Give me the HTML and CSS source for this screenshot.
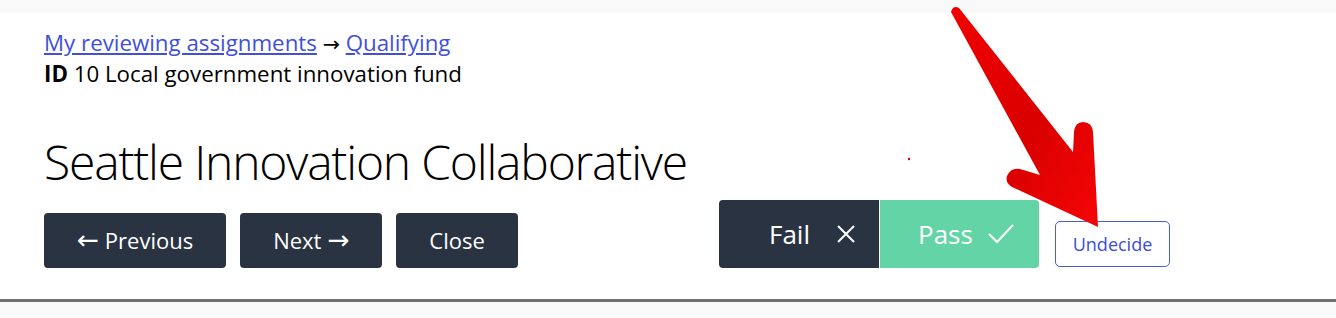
FILE: index.html
```html
<!DOCTYPE html>
<html lang="en">
<head>
    <meta charset="UTF-8">
    <meta name="viewport" content="width=device-width, initial-scale=1.0">
    <title>Seattle Innovation Collaborative</title>
    <link rel="stylesheet" href="styles.css">
</head>

<body>
    <main class="pagina">
        <nav class="trilha">
            <a href="#">My reviewing assignments</a> <span class="seta">&rarr;</span> <a href="#">Qualifying</a>
        </nav>
        <p class="programa"><b>ID</b> 10 Local government innovation fund</p>

        <div class="linha">
            <div class="coluna">
                <h1>Seattle Innovation Collaborative</h1>
                <div class="navegacao">
                    <button class="botao"><span class="seta">&larr;</span> Previous</button>
                    <button class="botao">Next <span class="seta">&rarr;</span></button>
                    <button class="botao">Close</button>
                </div>
            </div>

            <div class="decisao">
                <div class="grupo">
                    <button class="voto falha">
                        <span>Fail</span>
                        <svg width="18" height="18" viewBox="0 0 18 18"><path d="M1 1 L17 17 M17 1 L1 17" stroke="#fff" stroke-width="2" fill="none"/></svg>
                    </button>
                    <button class="voto passa">
                        <span>Pass</span>
                        <svg width="26" height="20" viewBox="0 0 26 20"><path d="M1 10 L9 18 L25 1" stroke="#fff" stroke-width="2" fill="none"/></svg>
                    </button>
                </div>
                <button class="indeciso">Undecide</button>
            </div>
        </div>
    </main>

    <svg class="anotacao" width="1336" height="318" viewBox="0 0 1336 318">
        <defs>
            <linearGradient id="vermelho" x1="0" y1="0" x2="1" y2="1">
                <stop offset="0" stop-color="#f20000"/>
                <stop offset="0.55" stop-color="#d90000"/>
                <stop offset="1" stop-color="#f50505"/>
            </linearGradient>
        </defs>
        <path fill="url(#vermelho)" d="M951 12 Q953 5 959 8 L1073 152 L1074 132 Q1075 122 1083 122 Q1092 122 1093 132 L1098 227 L1012 187 Q1005 183 1007 176 Q1011 167 1020 169 L1040 175 Z"/>
        <circle cx="909" cy="159" r="1.2" fill="#e00000"/>
    </svg>
</body>
</html>
```

FILE: styles.css
```css
body{
    margin: 0;
    background: #f9f9f9;
    font-family: "Open Sans", "Liberation Sans", sans-serif;
    color: #000;
}

.pagina{
    margin-top: 13px;
    background: #fff;
    border-bottom: 3px solid #707070;
    padding: 15px 44px 31px;
}

.trilha, .programa{
    font-size: 22.3px;
    line-height: 30px;
    margin: 0;
}

.trilha a{
    color: #4150dc;
}

.seta{
    font-family: "DejaVu Sans", sans-serif;
}

.trilha .seta{
    font-size: 0.92em;
}

.botao .seta{
    font-size: 1.2em;
    line-height: 1;
}

.programa b{
    font-weight: 700;
}

.linha{
    display: flex;
    align-items: flex-end;
    margin-top: 44px;
}

.coluna{
    width: 675px;
}

h1{
    font-size: 48px;
    font-weight: 300;
    font-stretch: 94%;
    letter-spacing: -1.2px;
    white-space: nowrap;
    line-height: 57.6px;
    margin: 0 0 22px;
}

.navegacao{
    display: flex;
    gap: 14px;
}

button{
    font-family: inherit;
    cursor: pointer;
}

.botao{
    height: 55px;
    padding: 0 33px;
    border: none;
    border-radius: 4px;
    background: #293342;
    color: #fff;
    font-size: 22px;
}

.decisao{
    display: flex;
    align-items: flex-end;
    gap: 16px;
}

.grupo{
    display: flex;
    gap: 1px;
}

.voto{
    height: 68px;
    display: flex;
    align-items: center;
    border: none;
    color: #fff;
    font-size: 26px;
}

.falha{
    width: 160px;
    padding: 0 24px 0 50px;
    gap: 27px;
    background: #293342;
    border-radius: 4px 0 0 4px;
}

.passa{
    width: 159px;
    padding: 0 25px 0 38px;
    gap: 15px;
    background: #63d4a5;
    border-radius: 0 4px 4px 0;
}

.indeciso{
    width: 115px;
    height: 46px;
    margin-bottom: 1px;
    border: 1px solid #4a5be0;
    border-radius: 5px;
    background: #fff;
    color: #3c4dd8;
    font-size: 18px;
}

.anotacao{
    position: absolute;
    top: 0;
    left: 0;
    pointer-events: none;
}
```
